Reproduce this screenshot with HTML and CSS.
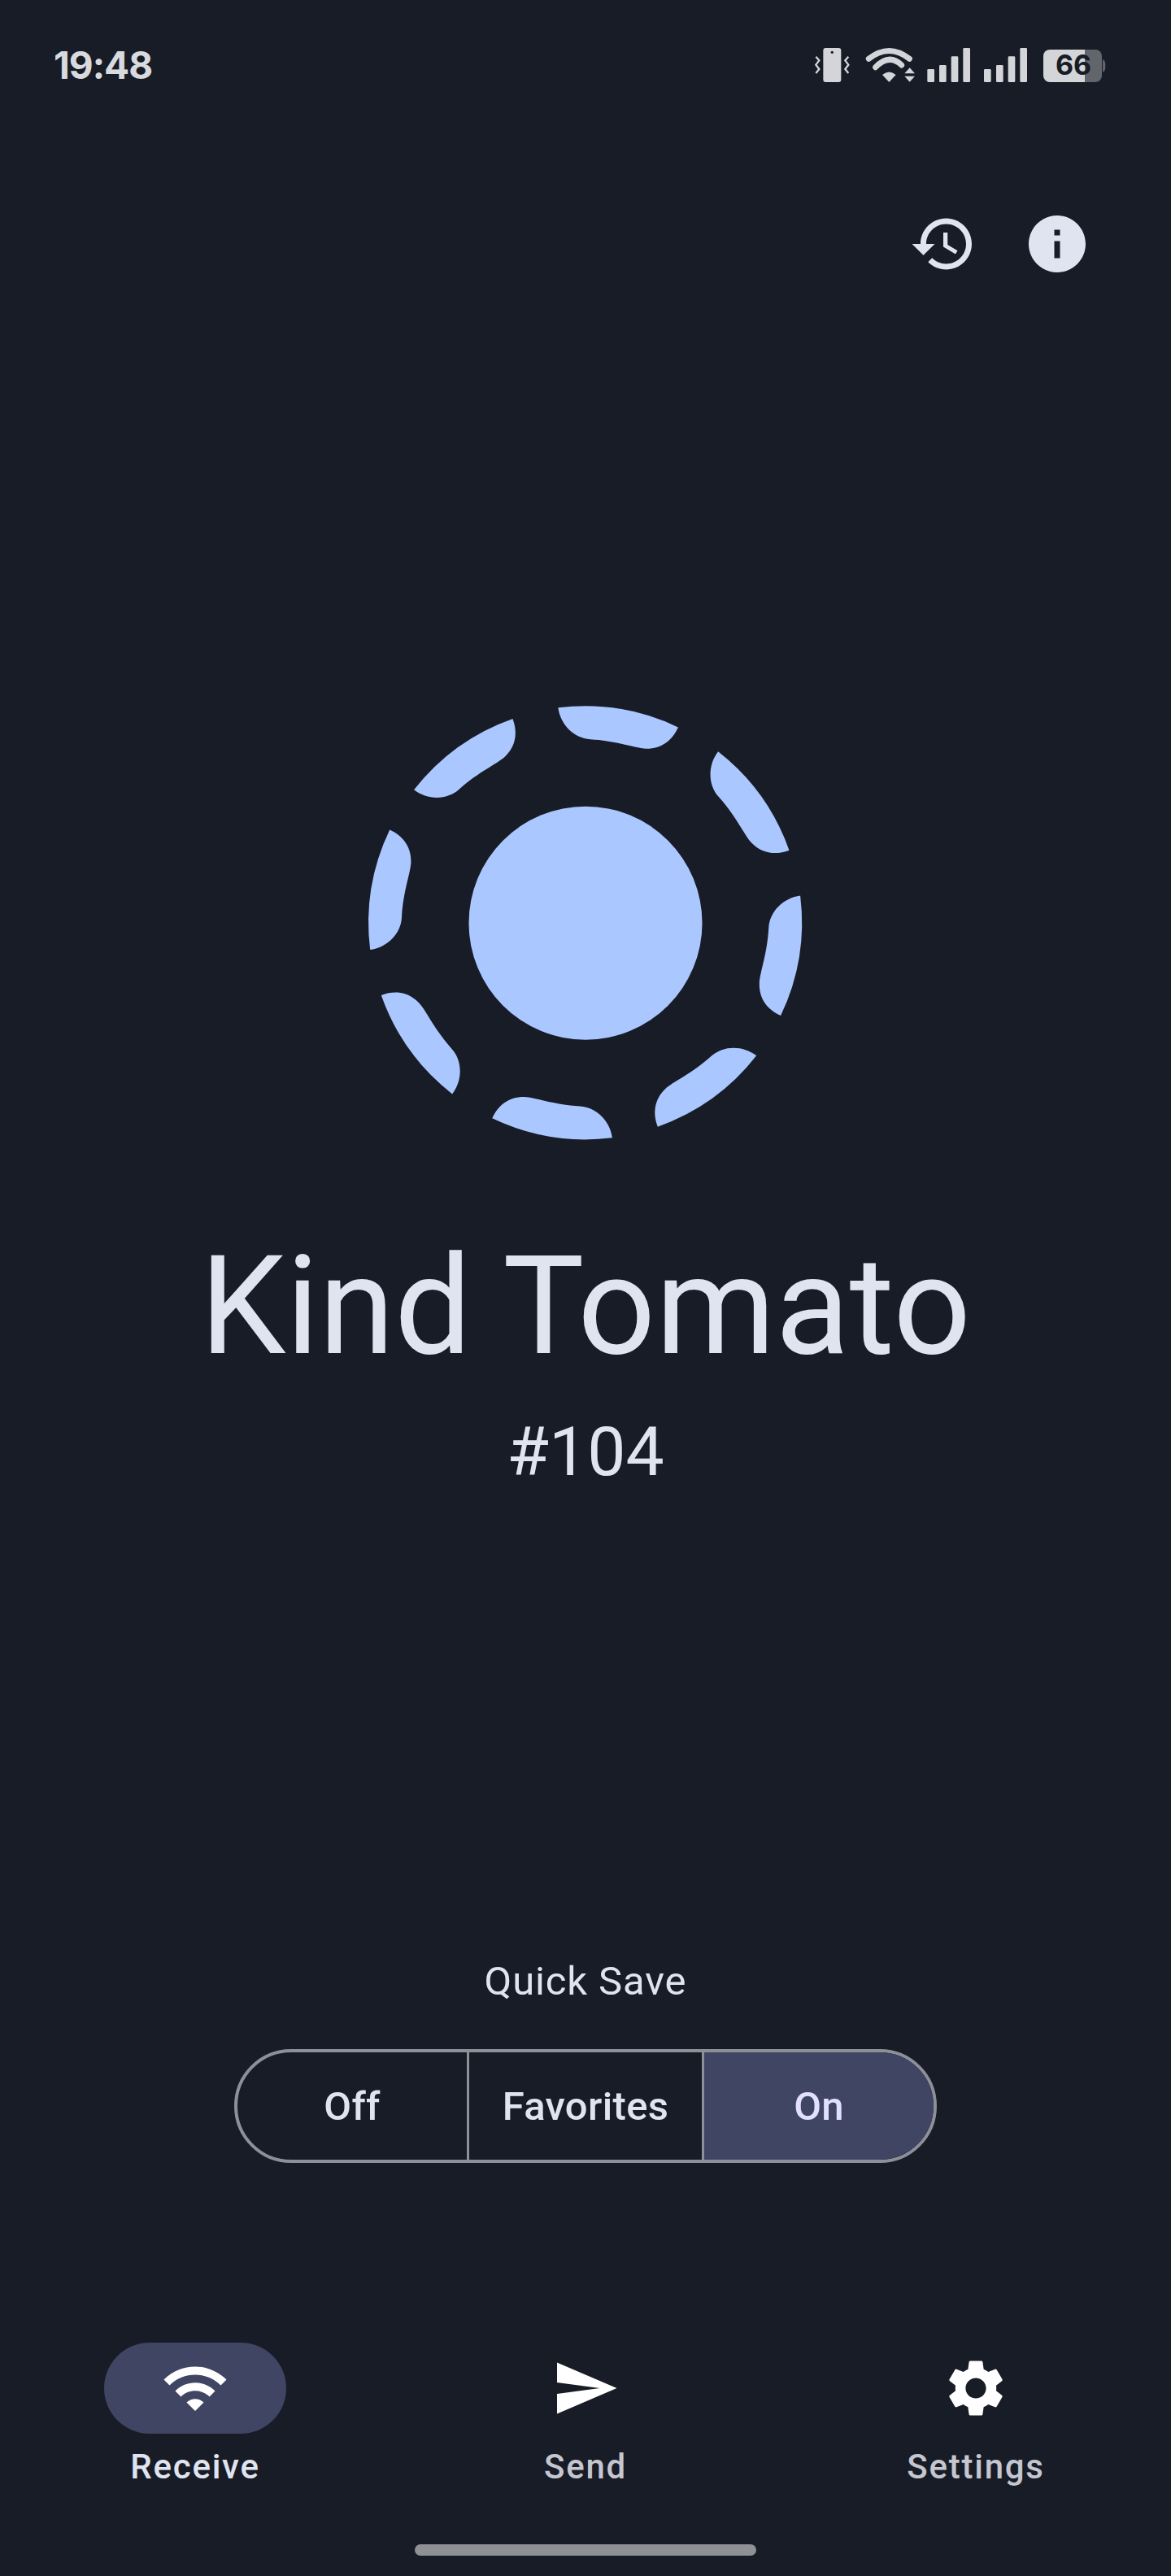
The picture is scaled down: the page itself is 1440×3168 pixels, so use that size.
FILE: index.html
```html
<!DOCTYPE html>
<html lang="en">
<head>
<meta charset="utf-8">
<title>Kind Tomato</title>
<link rel="stylesheet" href="styles.css">
</head>
<body>
<div class="screen">
  <header class="status">
    <span class="time">19:48</span>
    <svg class="status-icons" viewBox="0 0 1200 300">
      <rect class="si" x="97" y="87" width="66" height="126" rx="9"/>
      <circle class="sd" cx="130" cy="103" r="5"/>
      <path class="sl" d="M70 119l12 14-12 16 12 16-12 15"/>
      <path class="sl" d="M190 119l-12 14 12 16-12 16 12 15"/>
      <path class="sw" d="M265 127Q340 68 415 127"/>
      <path class="sw" d="M290 158Q340 106 386 150"/>
      <path class="si" d="M315 186Q340 165 365 186L340 213Z"/>
      <path class="si" d="M397 181l19-21 19 21zM397 191h38l-19 21z"/>
      <rect class="si" x="481" y="165" width="26" height="48" rx="4"/>
      <rect class="si" x="525" y="150" width="26" height="63" rx="4"/>
      <rect class="si" x="569" y="118" width="26" height="95" rx="4"/>
      <rect class="si" x="613" y="87" width="26" height="126" rx="4"/>
      <rect class="si" x="690" y="165" width="26" height="48" rx="4"/>
      <rect class="si" x="735" y="150" width="26" height="63" rx="4"/>
      <rect class="si" x="779" y="118" width="26" height="95" rx="4"/>
      <rect class="si" x="823" y="87" width="26" height="126" rx="4"/>
      <path class="bd" d="M1050 93h51a24 24 0 0 1 24 24v72a24 24 0 0 1-24 24h-51z"/>
      <path class="bd" d="M1128 130c7 2 10 8 10 23s-3 21-10 23z"/>
      <path class="si" d="M1062 93H933a24 24 0 0 0-24 24v72a24 24 0 0 0 24 24h129z"/>
      <text class="batt" x="1020" y="187" text-anchor="middle">66</text>
    </svg>
  </header>

  <div class="actions">
    <svg class="icon" viewBox="0 0 24 24"><path d="M13 3c-4.97 0-9 4.03-9 9H1l3.89 3.89.07.14L9 12H6c0-3.87 3.13-7 7-7s7 3.13 7 7-3.13 7-7 7c-1.93 0-3.68-.79-4.94-2.06l-1.42 1.42C8.27 19.99 10.51 21 13 21c4.97 0 9-4.03 9-9s-4.03-9-9-9zm-1 5v5l4.28 2.54.72-1.21-3.5-2.08V8H12z"/></svg>
    <svg class="icon" viewBox="0 0 24 24"><path d="M12 2C6.48 2 2 6.48 2 12s4.48 10 10 10 10-4.48 10-10S17.52 2 12 2zm1 15h-2v-6h2v6zm0-8h-2V7h2v2z"/></svg>
  </div>

  <main class="identity">
    <svg class="logo" viewBox="0 0 1568 1568">
      <defs>
        <path id="seg" d="M693 55A720 720 0 0 1 1092 120C1072 165 1035 192 985 191C950 190 890 165 800 160C745 157 700 110 693 55Z"/>
      </defs>
      <circle cx="784" cy="771" r="388"/>
      <use href="#seg"/>
      <use href="#seg" transform="rotate(45 783 770)"/>
      <use href="#seg" transform="rotate(90 783 770)"/>
      <use href="#seg" transform="rotate(135 783 770)"/>
      <use href="#seg" transform="rotate(180 783 770)"/>
      <use href="#seg" transform="rotate(225 783 770)"/>
      <use href="#seg" transform="rotate(270 783 770)"/>
      <use href="#seg" transform="rotate(315 783 770)"/>
    </svg>
    <h1 class="name">Kind Tomato</h1>
    <p class="code">#104</p>
  </main>

  <section class="quick">
    <p class="quick-label">Quick Save</p>
    <div class="segments">
      <button class="seg">Off</button>
      <button class="seg">Favorites</button>
      <button class="seg seg-on">On</button>
    </div>
  </section>

  <nav class="nav">
    <div class="tab tab-on">
      <span class="pill"><svg class="nav-icon" viewBox="0 0 24 24"><path d="M1 9l2 2c4.97-4.97 13.03-4.97 18 0l2-2C16.93 2.93 7.08 2.93 1 9zm8 8l3 3 3-3c-1.65-1.66-4.34-1.66-6 0zm-4-4l2 2c2.76-2.76 7.24-2.76 10 0l2-2C15.14 9.14 8.87 9.14 5 13z"/></svg></span>
      <span class="tab-label">Receive</span>
    </div>
    <div class="tab">
      <span class="pill"><svg class="nav-icon" viewBox="0 0 24 24"><path d="M2.01 21L23 12 2.01 3 2 10l15 2-15 2z"/></svg></span>
      <span class="tab-label">Send</span>
    </div>
    <div class="tab">
      <span class="pill"><svg class="nav-icon" viewBox="0 0 24 24"><path d="M19.14 12.94c.04-.3.06-.61.06-.94 0-.32-.02-.64-.07-.94l2.03-1.58c.18-.14.23-.41.12-.61l-1.92-3.32c-.12-.22-.37-.29-.59-.22l-2.39.96c-.5-.38-1.03-.7-1.62-.94l-.36-2.54c-.04-.24-.24-.41-.48-.41h-3.84c-.24 0-.43.17-.47.41l-.36 2.54c-.59.24-1.13.57-1.62.94l-2.39-.96c-.22-.08-.47 0-.59.22L2.74 8.87c-.12.21-.08.47.12.61l2.03 1.58c-.05.3-.09.63-.09.94s.02.64.07.94l-2.03 1.58c-.18.14-.23.41-.12.61l1.92 3.32c.12.22.37.29.59.22l2.39-.96c.5.38 1.03.7 1.62.94l.36 2.54c.05.24.24.41.48.41h3.84c.24 0 .44-.17.47-.41l.36-2.54c.59-.24 1.13-.56 1.62-.94l2.39.96c.22.08.47 0 .59-.22l1.92-3.32c.12-.22.07-.47-.12-.61l-2.01-1.58zM12 15.6c-1.98 0-3.6-1.62-3.6-3.6s1.62-3.6 3.6-3.6 3.6 1.62 3.6 3.6-1.62 3.6-3.6 3.6z"/></svg></span>
      <span class="tab-label">Settings</span>
    </div>
  </nav>
  <div class="home-row"><span class="home-bar"></span></div>
</div>
</body>
</html>
```
FILE: styles.css
```css
* { box-sizing: border-box; }
html, body { margin: 0; padding: 0; background: #181c26; }
.screen {
  width: 1440px;
  height: 3168px;
  display: flex;
  flex-direction: column;
  background: #181c26;
  font-family: Roboto, "Liberation Sans", sans-serif;
  color: #e0e4f0;
  overflow: hidden;
}
.status {
  height: 130px;
  padding: 30px 60px 0 66px;
  display: flex;
  align-items: center;
  justify-content: space-between;
}
.time {
  font-family: Inter, sans-serif;
  font-weight: 700;
  font-size: 46px;
  letter-spacing: -1px;
  line-height: 1;
  color: #d8dade;
}
.status-icons { width: 400px; height: 100px; display: block; }
.si { fill: #d3d5d9; }
.sd { fill: #181c26; }
.bd { fill: #62656c; }
.sl { fill: none; stroke: #d3d5d9; stroke-width: 7; }
.sw { fill: none; stroke: #d3d5d9; stroke-width: 21; stroke-linecap: round; }
.batt {
  font-family: Inter, sans-serif;
  font-weight: 700;
  font-size: 102px;
  fill: #181c26;
}
.actions {
  margin-top: 128px;
  padding-right: 98px;
  display: flex;
  justify-content: flex-end;
  gap: 56px;
}
.icon { width: 84px; height: 84px; display: block; fill: #e0e4f0; }
.identity {
  margin-top: 508px;
  display: flex;
  flex-direction: column;
  align-items: center;
}
.logo { width: 580px; height: 580px; display: block; fill: #aac7ff; }
.name {
  margin: 77px 0 0;
  font-size: 168px;
  font-weight: 400;
  line-height: 200px;
  color: #e0e4f0;
}
.code {
  margin: 29px 0 0;
  font-size: 84px;
  font-weight: 400;
  line-height: 100px;
  color: #e0e4f0;
}
.quick {
  margin-top: 571px;
  display: flex;
  flex-direction: column;
  align-items: center;
}
.quick-label {
  margin: 0;
  font-size: 49px;
  line-height: 60px;
  letter-spacing: 0.875px;
  color: #e0e4f0;
}
.segments {
  margin-top: 53px;
  width: 864px;
  height: 140px;
  display: grid;
  grid-template-columns: 285px 289px 1fr;
  border: 4px solid #8e9099;
  border-radius: 70px;
  overflow: hidden;
}
.seg {
  border: 0;
  border-right: 3px solid #8e9099;
  background: transparent;
  color: #e0e4f0;
  font-family: inherit;
  font-size: 49px;
  font-weight: 500;
  letter-spacing: 0.35px;
  padding: 0;
}
.seg:last-child { border-right: 0; }
.seg-on { background: #404563; color: #e1e1ff; }
.nav {
  margin-top: 221px;
  display: grid;
  grid-template-columns: repeat(3, 480px);
}
.tab { display: flex; flex-direction: column; align-items: center; }
.pill {
  width: 224px;
  height: 112px;
  border-radius: 56px;
  display: flex;
  align-items: center;
  justify-content: center;
}
.tab-on .pill { background: #404563; }
.nav-icon { width: 84px; height: 84px; display: block; fill: #ffffff; }
.tab-label {
  margin-top: 13px;
  font-size: 42px;
  font-weight: 500;
  line-height: 56px;
  letter-spacing: 1.75px;
  color: #c4c6d0;
}
.tab-on .tab-label { color: #e0e4f0; }
.home-row { margin-top: 67px; display: flex; justify-content: center; }
.home-bar { width: 420px; height: 14px; border-radius: 7px; background: #8e9095; }
```
